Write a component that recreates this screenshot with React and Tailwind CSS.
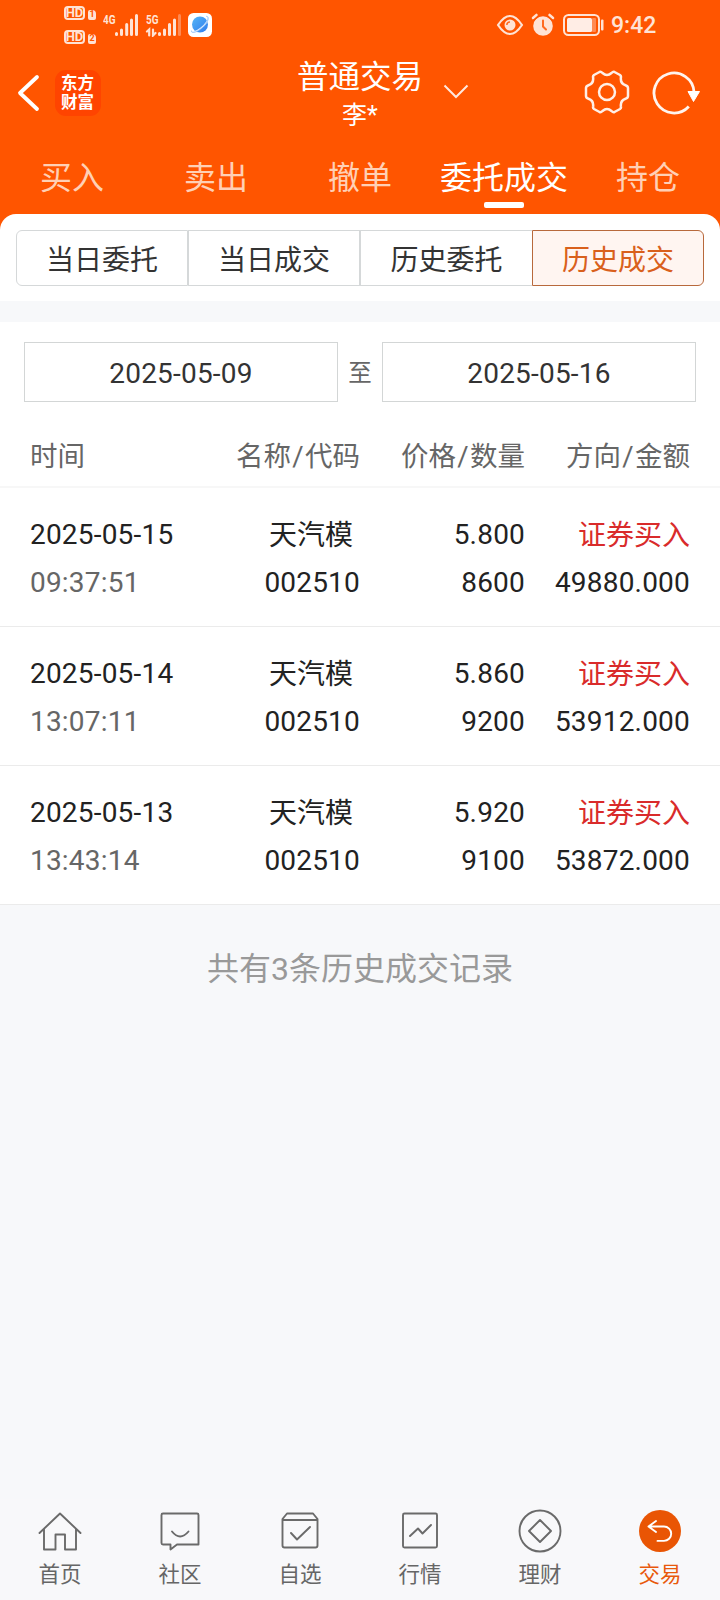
const tabs = ['买入', '卖出', '撤单', '委托成交', '持仓'];

const records = [
  { date: '2025-05-15', time: '09:37:51', name: '天汽模', code: '002510', price: '5.800', qty: '8600', side: '证券买入', amount: '49880.000' },
  { date: '2025-05-14', time: '13:07:11', name: '天汽模', code: '002510', price: '5.860', qty: '9200', side: '证券买入', amount: '53912.000' },
  { date: '2025-05-13', time: '13:43:14', name: '天汽模', code: '002510', price: '5.920', qty: '9100', side: '证券买入', amount: '53872.000' },
];

function HdBadge({ n }) {
  return (
    <div className="flex h-[14px] items-end gap-[3px]">
      <span className="flex h-[14px] w-[21px] items-center justify-center rounded-[4px] border-2 border-[#ffe3d5] text-[13px] leading-none font-bold text-[#ffe3d5]">HD</span>
      <span className="flex h-[10px] w-[8px] items-center justify-center rounded-[2px] rounded-tr-[4px] bg-[#ffe3d5] text-[9px] leading-none font-bold text-[#ff5500]">{n}</span>
    </div>
  );
}

function StatusBar() {
  return (
    <div className="flex h-[50px] items-center pt-[1px] text-[#ffe3d5]">
      <div className="ml-[64px] -mt-[2px] flex w-[39px] flex-col gap-[10px]">
        <HdBadge n="1" />
        <HdBadge n="2" />
      </div>
      <svg className="mt-[-2px] h-[24px] w-[36px]" viewBox="103 12 36 24" fill="none" stroke="#ffe3d5" strokeWidth="3" strokeLinecap="round">
        <text x="103" y="22.500" fontSize="13" fontWeight="700" fontFamily="Roboto" textLength="12.500" lengthAdjust="spacingAndGlyphs" fill="#ffe3d5" stroke="none">4G</text>
        <path d="M116.5 32.5v1M121.5 29v4.5M126.700 23.500v10M131.500 19v14.500M136.500 14.500v19" />
      </svg>
      <svg className="mt-[-2px] ml-[6px] h-[24px] w-[38px]" viewBox="145 12 38 24" fill="none" stroke="#ffe3d5" strokeWidth="3" strokeLinecap="round">
        <text x="146" y="22.500" fontSize="13" fontWeight="700" fontFamily="Roboto" textLength="12.500" lengthAdjust="spacingAndGlyphs" fill="#ffe3d5" stroke="none">5G</text>
        <path d="M147 30.500l2.200-2v6M153 28.500v6l2.500-2.500" strokeWidth="2.200" />
        <path d="M159.5 32.5v1M164.500 29v4.500M169.500 23.500v10M174.500 19v14.500" />
        <path d="M179.500 14.500v19" stroke="#ff8a52" />
      </svg>
      <svg className="ml-[5px] mt-[-2px] h-6 w-6" viewBox="0 0 24 24">
        <defs>
          <linearGradient id="planet" x1="0" y1="0" x2="1" y2="1">
            <stop offset="0" stopColor="#55b5f5" />
            <stop offset="1" stopColor="#2f7dee" />
          </linearGradient>
        </defs>
        <rect width="24" height="24" rx="5.500" fill="#fff" />
        <circle cx="12" cy="11.500" r="8" fill="url(#planet)" />
        <path d="M19 4.500c3 1-1.500 7-6 10.500S3.500 20.500 3.800 18" fill="none" stroke="#d9ecff" strokeWidth="1.400" />
        <path d="M18 3.300c4.500-.5 1.500 7-4 11.700S3 21 3.400 17.500" fill="none" stroke="#8dbaf2" strokeWidth=".7" />
      </svg>
      <svg className="ml-auto mt-[-2px] h-[24px] w-[28px]" viewBox="0 0 28 24" fill="none" stroke="#ffe3d5" strokeWidth="2.200">
        <path d="M2 12C7 4.500 10.500 3 14 3s7 1.500 12 9c-5 7.500-8.500 9-12 9S7 19.500 2 12z" strokeLinejoin="round" />
        <circle cx="14" cy="12" r="5.500" fill="#ffe3d5" stroke="none" />
        <path d="M10.800 12a3.200 3.200 0 0 1 3.200-3" stroke="#ff6a20" strokeWidth="1.500" />
      </svg>
      <svg className="ml-[7px] mt-[-2px] h-[24px] w-[24px]" viewBox="0 0 24 24" fill="none" strokeLinecap="round">
        <circle cx="12" cy="13" r="9.800" fill="#ffe3d5" />
        <path d="M2 5l3.500-3M22 5l-3.500-3" stroke="#ffe3d5" strokeWidth="2.600" />
        <path d="M2.500 7.500l5-4.500M21.500 7.500l-5-4.500" stroke="#ff5500" strokeWidth="1.400" />
        <path d="M12 7.500v6l3 3" stroke="#ff6a20" strokeWidth="2" />
      </svg>
      <svg className="ml-[8px] mt-[-2px] h-[24px] w-[42px]" viewBox="0 0 42 24">
        <rect x="1" y="2" width="35" height="20" rx="4.500" fill="none" stroke="#ffe3d5" strokeWidth="2" />
        <rect x="4" y="5" width="25" height="14" rx="1.500" fill="#ffede5" />
        <rect x="29" y="5" width="4" height="14" rx="1" fill="#ff8a52" />
        <rect x="38" y="6.500" width="2.500" height="11" rx="1" fill="#ffe3d5" />
      </svg>
      <span className="mr-[63px] ml-[6px] w-[46px] text-[23px] leading-[50px] font-medium">9:42</span>
    </div>
  );
}

function Header() {
  return (
    <div className="flex h-[96px] text-white">
      <div className="flex w-[240px] items-start">
        <svg className="mt-[24px] ml-[17px] h-[38px] w-[24px]" viewBox="0 0 24 38" fill="none" stroke="#fff" strokeWidth="3.800" strokeLinecap="round" strokeLinejoin="round">
          <path d="M20 3L3 19l17 16" />
        </svg>
        <div className="mt-[20px] ml-[14px] flex h-[46px] w-[46px] flex-col items-center justify-center rounded-[11px] bg-[#ff4400] pr-px text-[16.500px] leading-[19.500px] font-bold">
          <span>东方</span>
          <span>财富</span>
        </div>
      </div>
      <div className="relative flex w-[240px] flex-col items-center">
        <div className="mt-[6px] text-[31.5px] leading-[44px]">普通交易</div>
        <div className="-mt-px text-[25px] leading-[34px]">李*</div>
        <svg className="absolute top-[34px] left-[203px] h-[16px] w-[26px]" viewBox="0 0 26 16" fill="none" stroke="#ffe9de" strokeWidth="2">
          <path d="M1.500 1.500L13 13 24.500 1.500" />
        </svg>
      </div>
      <div className="flex w-[240px] items-start">
        <svg className="mt-[20px] ml-[104px] h-[44px] w-[46px]" viewBox="-23 -22 46 44" fill="none" stroke="#ffefe6" strokeWidth="2.500" strokeLinejoin="round">
          <path d="M-7.500 -20Q-6 -20.600 -4.500 -19Q0 -15 4.500 -19Q6 -20.600 7.500 -20L13 -17Q14.300 -16 13.900 -14.500Q13.200 -8.500 18.500 -6.800Q21 -6 21 -4V4Q21 6 18.500 6.800Q13.200 8.500 13.900 14.500Q14.300 16 13 17L7.500 20Q6 20.600 4.500 19Q0 15 -4.500 19Q-6 20.600 -7.500 20L-13 17Q-14.300 16 -13.900 14.500Q-13.200 8.500 -18.500 6.800Q-21 6 -21 4V-4Q-21 -6 -18.500 -6.800Q-13.200 -8.500 -13.900 -14.500Q-14.300 -16 -13 -17Z" />
          <circle r="8" />
        </svg>
        <svg className="mt-[20px] ml-[22px] h-[46px] w-[50px]" viewBox="0 0 50 46" fill="none" stroke="#fff4ee" strokeWidth="2.800">
          <path d="M36.800 36.500A20 20 0 1 1 42 22" />
          <path d="M36 21.500h11.500L41.500 31.500z" fill="#fff" stroke="#fff" strokeWidth="1" />
        </svg>
      </div>
    </div>
  );
}

function Segment({ label, className }) {
  return <div className={`flex h-[56px] items-center justify-center border pt-[5px] text-[28px] leading-[40px] ${className}`}>{label}</div>;
}

function ColumnTitle({ first, second }) {
  return (
    <div className="text-right">
      {first}
      <span className="mx-[1.300px]">/</span>
      {second}
    </div>
  );
}

function NavItem({ label, active, children }) {
  return (
    <div className={`flex flex-1 flex-col items-center ${active ? 'text-[#e8590c]' : 'text-[#666]'}`}>
      <svg className="h-[44px] w-[44px]" viewBox="0 0 44 44" fill="none" stroke="#6a6a6a" strokeWidth="1.900" strokeLinejoin="round" strokeLinecap="round">
        {children}
      </svg>
      <div className="mt-[7px] text-[21.500px] leading-[30px]">{label}</div>
    </div>
  );
}

export default function App() {
  return (
    <div className="flex h-[1600px] w-[720px] flex-col overflow-hidden bg-[#f7f8fa] font-[Roboto,'Noto_Sans_CJK_SC',sans-serif] text-[#222]">
      <div className="h-[234px] shrink-0 bg-[#ff5500]">
        <StatusBar />
        <Header />
        <div className="flex h-[68px]">
          {tabs.map((t) => (
            <div key={t} className={`flex flex-1 flex-col items-center text-[32px] leading-[44px] whitespace-nowrap ${t === '委托成交' ? 'text-white' : 'text-[#ffd0b5]'}`}>
              <div className="mt-[10px]">{t}</div>
              {t === '委托成交' && <div className="mt-[2px] h-[6px] w-[40px] rounded-[2px] bg-white" />}
            </div>
          ))}
        </div>
      </div>

      <div className="-mt-[20px] grid h-[87px] shrink-0 grid-cols-4 rounded-t-[16px] bg-white px-[16px] pt-[16px] text-[#333]">
        <Segment label="当日委托" className="rounded-l-[6px] border-[#d5d8d9]" />
        <Segment label="当日成交" className="border-[#d5d8d9]" />
        <Segment label="历史委托" className="border-r-0 border-[#d5d8d9]" />
        <Segment label="历史成交" className="rounded-r-[6px] border-[#b8693c] bg-[#fff5f1] text-[#d9601c]" />
      </div>

      <div className="mt-[21px] shrink-0 bg-white">
        <div className="flex items-center px-[24px] pt-[20px] text-[28px] text-[#333]">
          <div className="flex h-[60px] flex-1 items-center justify-center border border-[#d3d6d6] pt-[4px] tracking-[0.2px]">2025-05-09</div>
          <div className="w-[44px] pt-[4px] text-center text-[23.500px] text-[#666]">至</div>
          <div className="flex h-[60px] flex-1 items-center justify-center border border-[#d3d6d6] pt-[4px] tracking-[0.2px]">2025-05-16</div>
        </div>
        <div className="grid h-[86px] grid-cols-[170px_160px_165px_165px] border-b-2 border-[#f7f7f7] px-[30px] pt-[33px] text-[27.500px] leading-[44px] text-[#666]">
          <div>时间</div>
          <ColumnTitle first="名称" second="代码" />
          <ColumnTitle first="价格" second="数量" />
          <ColumnTitle first="方向" second="金额" />
        </div>
        {records.map((r) => (
          <div key={r.date} className="grid h-[139px] grid-cols-[170px_160px_165px_165px] border-b border-[#ebebeb] px-[30px] pt-[23px] text-[28px] leading-[48px] tracking-[0.200px]">
            <div>
              <div>{r.date}</div>
              <div className="text-[#666]">{r.time}</div>
            </div>
            <div className="text-right">
              <div className="pt-px pr-[7px] leading-[47px] tracking-normal">{r.name}</div>
              <div>{r.code}</div>
            </div>
            <div className="text-right">
              <div>{r.price}</div>
              <div>{r.qty}</div>
            </div>
            <div className="text-right">
              <div className="pt-px leading-[47px] tracking-normal text-[#d92b2b]">{r.side}</div>
              <div>{r.amount}</div>
            </div>
          </div>
        ))}
      </div>

      <div className="mt-[42px] text-center text-[32px] leading-[44px] text-[#999]">共有3条历史成交记录</div>

      <div className="mt-auto flex h-[101px] shrink-0 bg-[#f8f8fa] pt-[10px]">
        <NavItem label="首页">
          <path d="M1.500 24L22 4.500 42.500 24M6 20v20.500h11.500V25.500h9.500v15h11V20" />
        </NavItem>
        <NavItem label="社区">
          <path d="M5 4.500h34a1.500 1.500 0 0 1 1.500 1.500V35.500H19l-6.500 5V35.500H5a1.500 1.500 0 0 1-1.500-1.500v-28A1.500 1.500 0 0 1 5 4.500z" />
          <path d="M14 22.500q8 10 16.500 0" />
        </NavItem>
        <NavItem label="自选">
          <path d="M4.500 10L9 4.500h26l4.500 5.500V36.500a2 2 0 0 1-2 2h-31a2 2 0 0 1-2-2zM4.500 11h35M13 24l6 6.500 13-12.500" />
        </NavItem>
        <NavItem label="行情">
          <rect x="5" y="4.500" width="34" height="34" rx="1.500" />
          <path d="M12 27l8-7.500 4.500 5L33 16" />
        </NavItem>
        <NavItem label="理财">
          <circle cx="22" cy="22" r="20.500" />
          <path d="M22 11l11 11-11 11-11-11z" />
        </NavItem>
        <NavItem label="交易" active>
          <circle cx="22" cy="22" r="21" fill="#e95504" stroke="none" />
          <path d="M18 12L10.500 17.500l7.500 5.500M10.500 17.500H26a7.200 7.200 0 0 1 0 14.400h-6.500" stroke="#fff" />
        </NavItem>
      </div>
    </div>
  );
}
